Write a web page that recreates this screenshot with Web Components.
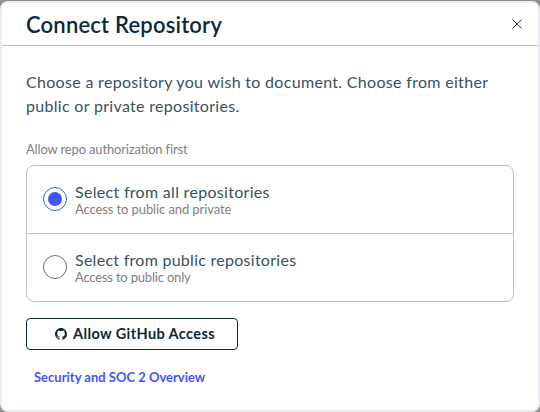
<!DOCTYPE html>
<html lang="en">
<head>
<meta charset="utf-8">
<title>Connect Repository</title>
<style>
html, body { margin: 0; height: 100%; background: #918e8c; overflow: hidden; }
body { font-family: Lato, "Open Sans", sans-serif; color: #0c293b; }
</style>
</head>
<body>
<modal-dialog heading="Connect Repository">
  <intro-text>Choose a repository you wish to document. Choose from either public or private repositories.</intro-text>
  <radio-list label="Allow repo authorization first">
    <radio-option checked style="--title-gap:.3px;--note-gap:-.1px">Select from all repositories<span slot="note">Access to public and private</span></radio-option>
    <radio-option style="--title-gap:.27px;--note-gap:-.19px">Select from public repositories<span slot="note">Access to public only</span></radio-option>
  </radio-list>
  <github-button>Allow GitHub Access</github-button>
  <text-link>Security and SOC 2 Overview</text-link>
</modal-dialog>
<script>
const define = (name, html, setup) => customElements.define(name, class extends HTMLElement {
  connectedCallback() {
    const t = document.createElement('template');
    t.innerHTML = html;
    const root = this.attachShadow({ mode: 'open' });
    root.append(t.content.cloneNode(true));
    if (setup) setup(this, root);
  }
});

define('modal-dialog', `
<style>
:host { display: flex; flex-direction: column; box-sizing: border-box; height: 411px; margin-top: 1px; background: #fff; border: 2px solid #e9edf2; border-radius: 8px; }
header { display: flex; align-items: center; justify-content: space-between; box-sizing: border-box; height: 43px; padding: 0 16px 0 24px; border-bottom: 1px solid #bfc0ca; }
h1 { margin: 0; padding-top: 1px; font-size: 22px; line-height: 26px; font-weight: 600; letter-spacing: .2px; }
svg { display: block; }
main { display: flex; flex-direction: column; align-items: flex-start; padding: 24px 24px 0; }
</style>
<header><h1></h1><svg width="10" height="10" viewBox="0 0 10 10" fill="none" stroke="#0c293b" stroke-width=".9"><path d="M.5.5l9 9M9.5.5l-9 9"/></svg></header>
<main><slot></slot></main>`, (el, root) => { root.querySelector('h1').textContent = el.getAttribute('heading'); });

define('intro-text', `
<style>:host { display: block; font-size: 16px; line-height: 24px; letter-spacing: .31px; color: #3a5161; }</style>
<slot></slot>`);

define('radio-list', `
<style>
:host { display: block; align-self: stretch; margin-top: 23px; }
label { display: block; font-size: 13px; line-height: 16px; letter-spacing: -.16px; color: #808080; }
div { margin-top: 8px; border: 1px solid #bfc0ca; border-radius: 8px; }
</style>
<label></label><div><slot></slot></div>`, (el, root) => { root.querySelector('label').textContent = el.getAttribute('label'); });

define('radio-option', `
<style>
:host { display: flex; align-items: center; gap: 8px; box-sizing: border-box; height: 67px; padding: 0 16px 2px; }
:host(:not(:first-child)) { height: 68px; border-top: 1px solid #bfc0ca; }
i { flex: none; display: grid; place-items: center; box-sizing: border-box; width: 24px; height: 24px; border: 1px solid #6b6b6b; border-radius: 50%; }
:host([checked]) i { border-color: #4353ff; }
:host([checked]) i::after { content: ""; width: 14px; height: 14px; border-radius: 50%; background: #4353ff; }
.title { font-size: 16px; line-height: 20px; letter-spacing: var(--title-gap); color: #3a5161; }
.note { font-size: 13px; line-height: 14px; letter-spacing: var(--note-gap); color: #808080; }
</style>
<i></i><div><div class="title"><slot></slot></div><div class="note"><slot name="note"></slot></div></div>`);

define('github-button', `
<style>
:host { display: block; margin-top: 16px; }
button { display: flex; align-items: center; justify-content: center; gap: 6px; box-sizing: border-box; width: 212px; height: 32px; padding: 0 0 0 6px; border: 1px solid #0c293b; border-radius: 4px; background: #fff; color: inherit; font: 700 14.5px/20px Lato, "Open Sans", sans-serif; letter-spacing: .39px; }
svg { display: block; }
</style>
<button><svg width="12" height="12" viewBox="0 0 16 16" fill="#0c293b"><path d="M8 0C3.58 0 0 3.58 0 8c0 3.54 2.29 6.53 5.47 7.59.4.07.55-.17.55-.38 0-.19-.01-.82-.01-1.49-2.01.37-2.53-.49-2.69-.94-.09-.23-.48-.94-.82-1.13-.28-.15-.68-.52-.01-.53.63-.01 1.08.58 1.23.82.72 1.21 1.87.87 2.33.66.07-.52.28-.87.51-1.07-1.78-.2-3.64-.89-3.64-3.95 0-.87.31-1.59.82-2.15-.08-.2-.36-1.02.08-2.12 0 0 .67-.21 2.2.82.64-.18 1.32-.27 2-.27s1.36.09 2 .27c1.53-1.04 2.2-.82 2.2-.82.44 1.1.16 1.92.08 2.12.51.56.82 1.27.82 2.15 0 3.07-1.87 3.75-3.65 3.95.29.25.54.73.54 1.48 0 1.07-.01 1.93-.01 2.2 0 .21.15.46.55.38A8.01 8.01 0 0 0 16 8c0-4.42-3.58-8-8-8z"/></svg><slot></slot></button>`);

define('text-link', `
<style>:host { display: block; margin: 19px 0 0 8px; font-size: 13px; line-height: 16px; font-weight: 700; letter-spacing: 0; color: #4353ff; }</style>
<slot></slot>`);
</script>
</body>
</html>
